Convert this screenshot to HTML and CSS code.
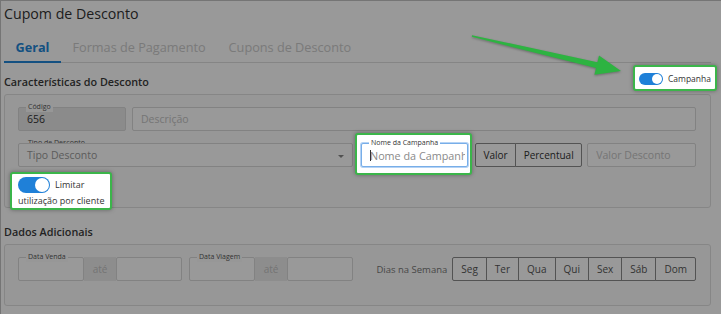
FILE: index.html
```html
<!DOCTYPE html>
<html lang="pt-BR">
<head>
  <meta charset="utf-8">
  <title>Cupom de Desconto</title>
  <link rel="stylesheet" href="styles.css">
</head>
<body>
<div class="page">
  <h1 class="title">Cupom de Desconto</h1>
  <nav class="tabs">
    <a class="tab active">Geral</a>
    <a class="tab">Formas de Pagamento</a>
    <a class="tab">Cupons de Desconto</a>
  </nav>

  <div class="section-head">
    <h2>Características do Desconto</h2>
    <label class="spot campanha"><span class="switch"></span>Campanha</label>
  </div>
  <div class="box">
    <div class="row">
      <div class="field codigo"><span class="legend">Código</span><input class="input" value="656" disabled></div>
      <div class="field grow"><input class="input" placeholder="Descrição"></div>
    </div>
    <div class="row row2">
      <div class="field tipo"><span class="legend">Tipo de Desconto</span><div class="input select">Tipo Desconto</div></div>
      <div class="spot nome">
        <div class="field focus"><span class="legend">Nome da Campanha</span><input class="input" placeholder="Nome da Campanha"></div>
      </div>
      <div class="btn-group tipo-valor">
        <button class="btn">Valor</button>
        <button class="btn">Percentual</button>
      </div>
      <div class="field grow valor"><input class="input" placeholder="Valor Desconto"></div>
    </div>
    <label class="spot limit">
      <span class="limit-top"><span class="switch big"></span>Limitar</span>
      <span class="limit-bottom">utilização por cliente</span>
    </label>
  </div>

  <div class="section-head second">
    <h2>Dados Adicionais</h2>
  </div>
  <div class="box box2">
    <div class="row">
      <div class="date-group">
        <div class="field date"><span class="legend">Data Venda</span><input class="input"></div>
        <span class="addon">até</span>
        <div class="field date"><input class="input"></div>
      </div>
      <div class="date-group">
        <div class="field date"><span class="legend">Data Viagem</span><input class="input"></div>
        <span class="addon">até</span>
        <div class="field date"><input class="input"></div>
      </div>
      <div class="dias">
        <span class="dias-label">Dias na Semana</span>
        <div class="btn-group days">
          <button class="btn">Seg</button>
          <button class="btn">Ter</button>
          <button class="btn">Qua</button>
          <button class="btn">Qui</button>
          <button class="btn">Sex</button>
          <button class="btn">Sáb</button>
          <button class="btn">Dom</button>
        </div>
      </div>
    </div>
  </div>

  <!-- tutorial overlay -->
  <div class="dim"></div>
  <svg class="arrow" width="721" height="314" viewBox="0 0 721 314">
    <polygon points="472,35.2 597.4,62.2 599,55.4 621,71 594.4,74.8 596,68 471.8,36.8" />
  </svg>
</div>
</body>
</html>
```

FILE: styles.css
```css
body {
  margin: 0;
  font-family: "Open Sans", "Noto Sans", sans-serif;
  color: #333;
  background: #fff;
  overflow: hidden;
}
.page {
  position: relative;
  box-sizing: border-box;
  min-height: 314px;
  border-top: 1px solid #c4c4c4;
  border-left: 1px solid #c4c4c4;
  padding: 0 10px 0 3px;
}
.title {
  margin: 0;
  padding-top: 2px;
  font-size: 14.2px;
  font-weight: 400;
  line-height: 22px;
}

/* tabs */
.tabs {
  display: flex;
  margin-top: 12px;
  border-bottom: 1px solid #dedede;
}
.tab {
  font-size: 12.7px;
  line-height: 20px;
  padding: 0 11.5px 4px;
  margin-bottom: -1px;
  color: #cccccc;
  border-bottom: 2px solid transparent;
}
.tab.active {
  color: #2286d8;
  font-weight: 700;
  border-bottom-color: #2286d8;
}

/* sections */
.section-head {
  display: flex;
  justify-content: space-between;
  margin-top: 10px;
}
.section-head h2 {
  margin: 0;
  font-size: 10.8px;
  line-height: 18px;
  font-weight: 600;
  color: #3a3a3a;
}
.section-head.second {
  margin-top: 15px;
}
.box {
  margin-top: 3px;
  padding: 12px 14px 0 13px;
  border: 1px solid #e0e0e0;
  border-radius: 3px;
  background: #fcfcfc;
}
.box2 {
  padding-bottom: 24px;
}
.row {
  display: flex;
  gap: 6px;
}
.row2 {
  gap: 0;
  margin-top: 12px;
}

/* fields */
.field {
  position: relative;
}
.grow {
  flex: 1;
}
.codigo {
  width: 108px;
}
.tipo {
  width: 335px;
}
.valor {
  margin-left: 5px;
}
.legend {
  position: absolute;
  top: -5px;
  left: 8px;
  padding: 0 2px;
  font-size: 7px;
  line-height: 10px;
  color: #555;
  background: #fcfcfc;
}
.input {
  display: block;
  box-sizing: border-box;
  width: 100%;
  height: 24px;
  padding: 0 2px 0 8px;
  border: 1px solid #d9d9d9;
  border-radius: 2px;
  background: #fff;
  font: inherit;
  font-size: 10.5px;
  color: #333;
  outline: none;
}
.input::placeholder {
  color: #c4c4c4;
}
.input:disabled {
  background: #e8e8e8;
  color: #333;
  -webkit-text-fill-color: #333;
}
.select {
  display: flex;
  align-items: center;
  color: #9a9a9a;
  position: relative;
}
.select::after {
  content: "";
  position: absolute;
  right: 8px;
  top: 11px;
  border-left: 3px solid transparent;
  border-right: 3px solid transparent;
  border-top: 3px solid #888;
}

/* highlighted controls */
.spot {
  position: relative;
  z-index: 2;
  background: #fff;
  border: 2px solid #3bb54a;
  border-radius: 3px;
  box-shadow: 0 0 4px rgba(0, 0, 0, 0.35);
}
.campanha {
  display: flex;
  align-items: center;
  align-self: flex-start;
  height: 14px;
  margin: -8px -6px 0 0;
  padding: 5px 4px 3px 4px;
  font-size: 8.5px;
  line-height: 14px;
}
.nome {
  width: 107px;
  margin: -10px -4px -8px 2px;
  padding: 8px 2px 6px 4px;
}
.nome .legend {
  background: #fff;
  color: #333;
}
.nome .input {
  font-size: 10.8px;
  border-color: #78aee8;
  box-shadow: 0 0 0 1px #b5d3f5;
}
.nome .input::placeholder {
  color: #8a8a8a;
}
.focus::before {
  content: "";
  position: absolute;
  left: 9px;
  top: 7px;
  width: 1px;
  height: 11px;
  background: #333;
  z-index: 1;
}
.limit {
  display: flex;
  flex-direction: column;
  width: fit-content;
  margin: 5px 0 -3px -8px;
  padding: 1px 6px 1px;
  font-size: 9px;
  color: #333;
}
.limit-top {
  display: flex;
  align-items: center;
  height: 19px;
}
.limit-bottom {
  line-height: 13px;
}
.switch {
  position: relative;
  flex-shrink: 0;
  width: 24px;
  height: 12px;
  margin-right: 5px;
  border-radius: 6px;
  background: #1f80d8;
}
.switch::after {
  content: "";
  position: absolute;
  top: 1px;
  right: 1px;
  width: 10px;
  height: 10px;
  border-radius: 50%;
  background: #fff;
}
.switch.big {
  width: 32px;
  height: 16px;
  border-radius: 8px;
}
.switch.big::after {
  width: 14px;
  height: 14px;
}

/* buttons */
.btn-group {
  display: flex;
}
.tipo-valor {
  margin-left: 7px;
}
.btn {
  height: 24px;
  margin: 0 0 0 -1px;
  padding: 0 8px;
  border: 1px solid #8a8a8a;
  border-radius: 0;
  background: #fff;
  font: inherit;
  font-size: 10px;
  color: #333;
}
.tipo-valor .btn {
  padding: 0 7.5px;
}
.btn:first-child {
  margin-left: 0;
  border-radius: 2px 0 0 2px;
}
.btn:last-child {
  border-radius: 0 2px 2px 0;
}
.days .btn {
  color: #555;
}

/* dates */
.date-group {
  display: flex;
}
.date-group + .date-group {
  margin-left: 1px;
}
.date {
  width: 66px;
}
.addon {
  display: flex;
  align-items: center;
  justify-content: center;
  box-sizing: border-box;
  width: 32px;
  height: 24px;
  background: #ececec;
  color: #c2c2c2;
  font-size: 10px;
}
.dias {
  display: flex;
  align-items: center;
  margin-left: auto;
}
.dias-label {
  margin-right: 5px;
  font-size: 9.5px;
  color: #777;
}

/* overlay */
.dim {
  position: absolute;
  top: -1px;
  left: -1px;
  right: 0;
  bottom: 0;
  background: rgba(0, 0, 0, 0.4);
  z-index: 1;
}
.arrow {
  position: absolute;
  top: -1px;
  left: -1px;
  z-index: 3;
  pointer-events: none;
}
.arrow polygon {
  fill: #2db341;
  filter: drop-shadow(0 1px 1px rgba(0, 0, 0, 0.3));
}
```
